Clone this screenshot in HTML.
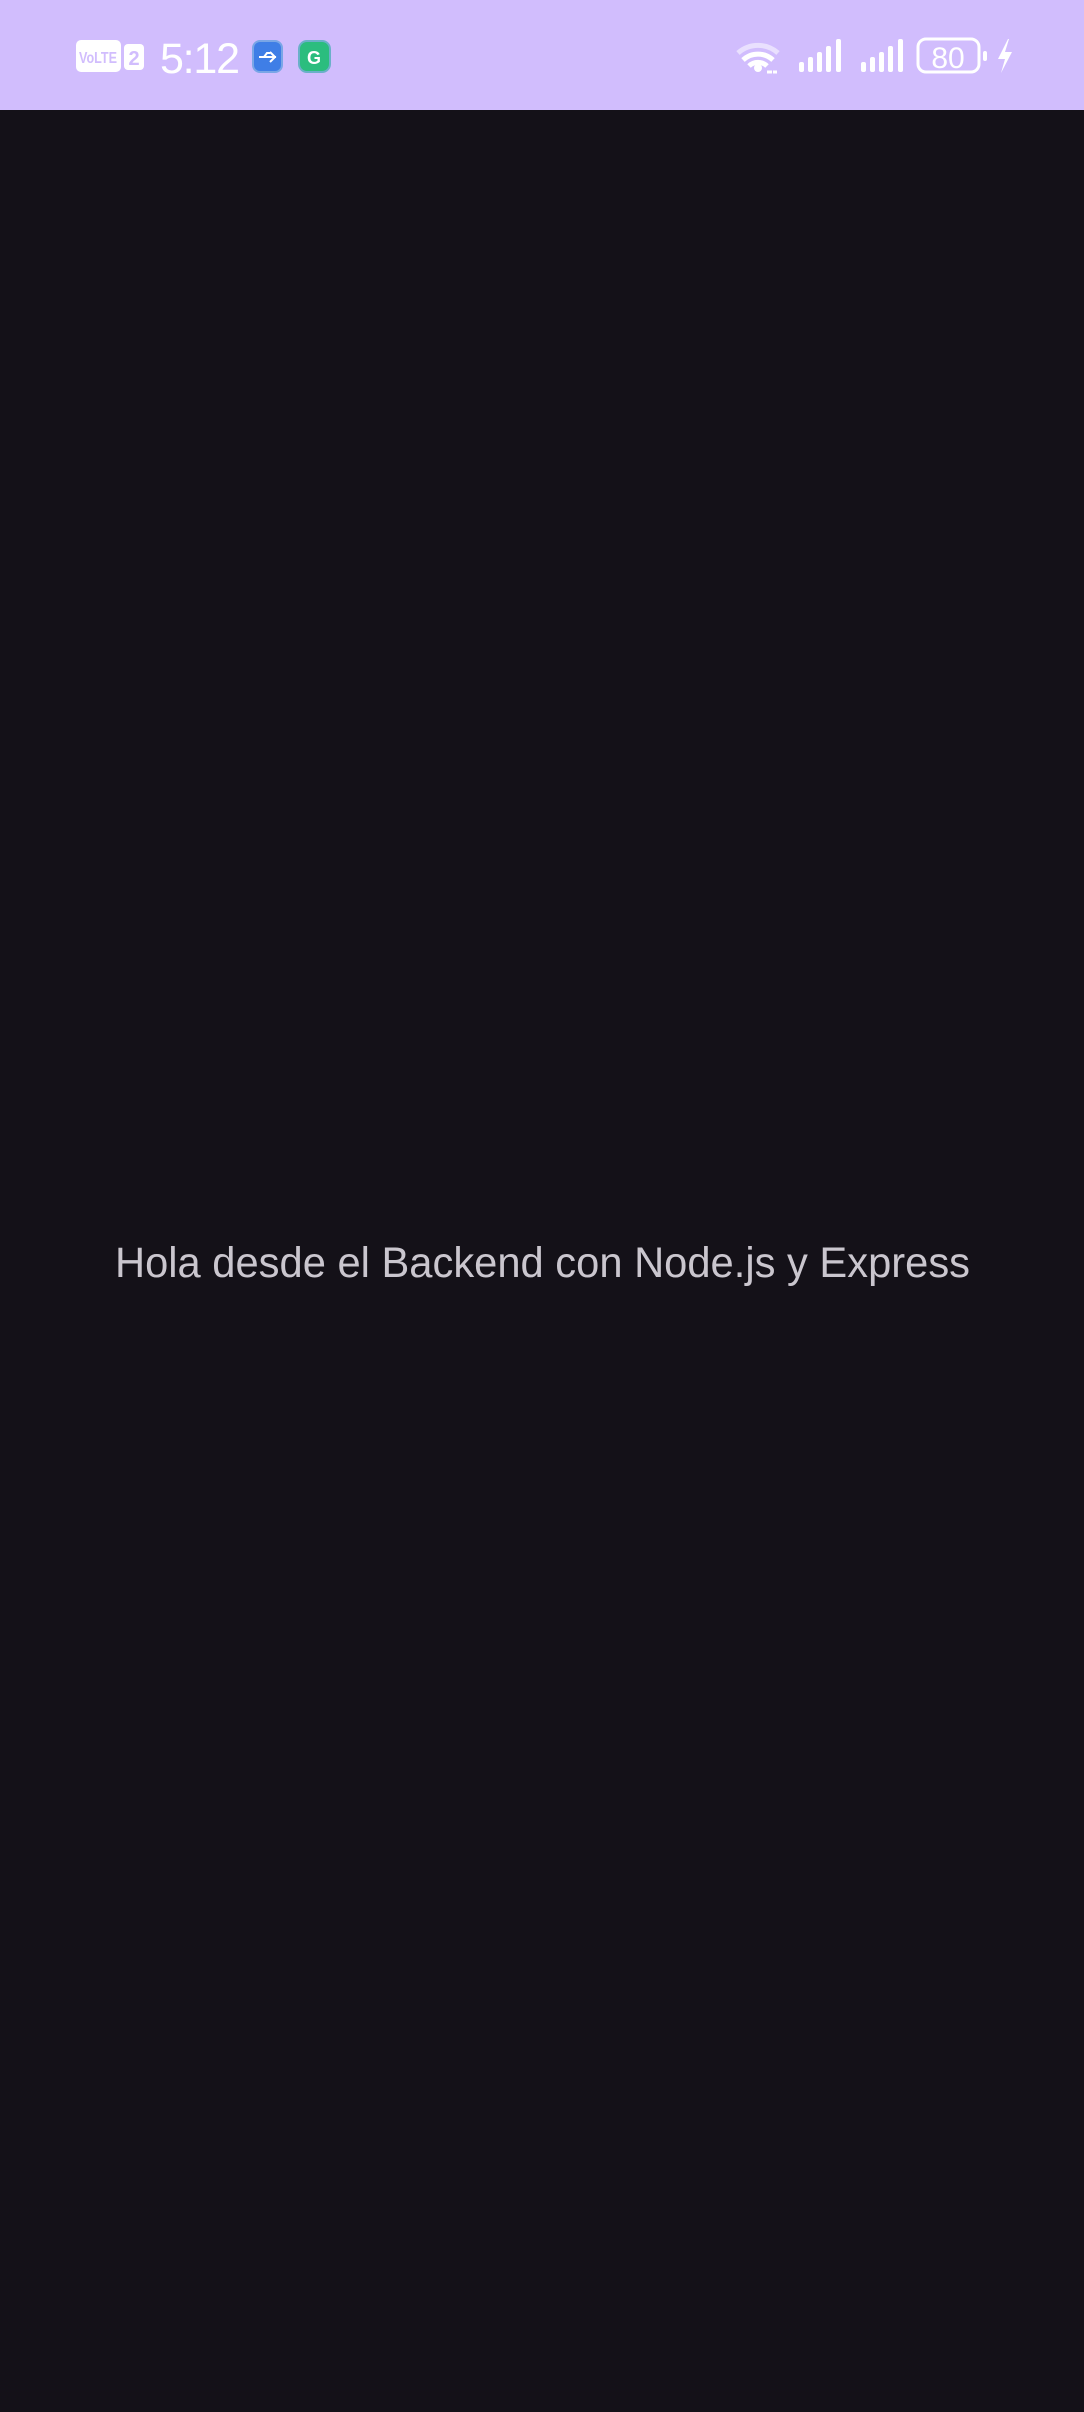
<!DOCTYPE html>
<html><head><style>
html,body{margin:0;padding:0;background:#141118;width:1084px;height:2412px;overflow:hidden;font-family:"Liberation Sans",sans-serif}
.sb{position:absolute;left:0;top:0;width:1084px;height:110px;background:#d1bdfd}
</style></head><body>
<div class="sb">
<svg width="1084" height="110" style="position:absolute;left:0;top:0">
<rect x="76" y="40" width="45" height="32" rx="5" fill="#fff"/>
<text x="98" y="63" font-size="16" font-weight="bold" fill="#d1bdfd" text-anchor="middle" textLength="38" lengthAdjust="spacingAndGlyphs">VoLTE</text>
<rect x="124" y="44" width="20" height="26" rx="4" fill="#fff"/>
<text x="134" y="65" font-size="20" font-weight="bold" fill="#d1bdfd" text-anchor="middle">2</text>
<text x="160" y="73" font-size="43" fill="#fff" textLength="80">5:12</text>
<rect x="253" y="41" width="29" height="31" rx="7" fill="#3f7ee6" stroke="#7aa6e6" stroke-width="2"/>
<path d="M259 57h17M270 52l5 5-5 5M264 57l3-4h3" stroke="#fff" stroke-width="2" fill="none"/>
<rect x="299" y="41" width="31" height="31" rx="8" fill="#2bbd7e" stroke="#6ab0c8" stroke-width="2"/>
<text x="314" y="64" font-size="18" font-weight="bold" fill="#fff" text-anchor="middle">G</text>
<path d="M738 53a30 30 0 0 1 40 0" stroke="#e9e0fe" stroke-width="5" fill="none"/>
<path d="M743 60a22 22 0 0 1 30 0" stroke="#fff" stroke-width="5" fill="none"/>
<path d="M749 66a13 13 0 0 1 18 0" stroke="#fff" stroke-width="5" fill="none"/>
<circle cx="758" cy="68" r="4" fill="#fff"/>
<path d="M767 72h5M773 72h4" stroke="#fff" stroke-width="3"/>
<g fill="#fff">
<rect x="799" y="62" width="5" height="10" rx="2"/><rect x="808" y="57" width="5" height="15" rx="2"/><rect x="817" y="52" width="5" height="20" rx="2"/><rect x="826" y="46" width="5" height="26" rx="2"/><rect x="836" y="39" width="5" height="33" rx="2"/>
<rect x="861" y="62" width="5" height="10" rx="2"/><rect x="870" y="57" width="5" height="15" rx="2"/><rect x="879" y="52" width="5" height="20" rx="2"/><rect x="888" y="46" width="5" height="26" rx="2"/><rect x="898" y="39" width="5" height="33" rx="2"/>
</g>
<rect x="918" y="39" width="61" height="33" rx="8" fill="none" stroke="#fff" stroke-width="3"/>
<rect x="983" y="51" width="4" height="10" rx="2" fill="#fff"/>
<text x="948" y="68" font-size="30" fill="#fff" text-anchor="middle">80</text>
<path d="M1008 39l-10 20h7l-4 14 11-21h-7l4-13z" fill="#fff"/>
</svg>
</div>
<svg width="1084" height="60" style="position:absolute;left:0;top:1236px">
<text x="115" y="41" font-size="43" fill="#cac6ce" textLength="855" lengthAdjust="spacingAndGlyphs">Hola desde el Backend con Node.js y Express</text>
</svg>
</body></html>
